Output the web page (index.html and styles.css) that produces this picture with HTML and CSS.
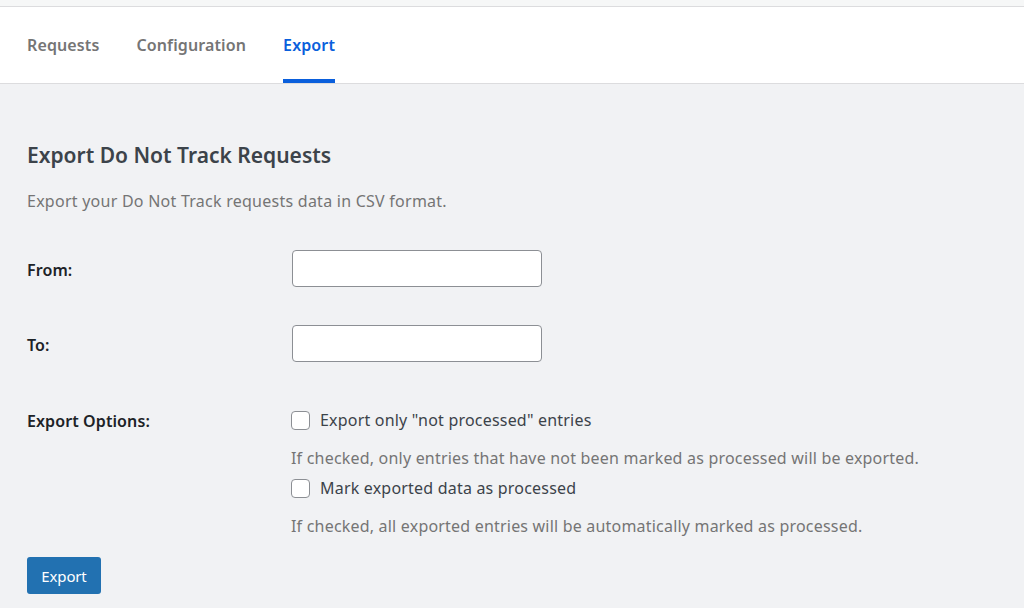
FILE: index.html
```html
<!DOCTYPE html>
<html>
<head>
<meta charset="utf-8">
<link rel="stylesheet" href="styles.css">
</head>
<body>
<div class="topstrip"></div>
<nav class="tabs">
  <a class="tab">Requests</a>
  <a class="tab">Configuration</a>
  <a class="tab active">Export</a>
</nav>
<main class="content">
  <h1 class="title">Export Do Not Track Requests</h1>
  <p class="intro">Export your Do Not Track requests data in CSV format.</p>
  <div class="form">
    <div class="row field">
      <label class="label">From:</label>
      <input class="input" type="text">
    </div>
    <div class="row field">
      <label class="label">To:</label>
      <input class="input" type="text">
    </div>
    <div class="row options">
      <div class="label">Export Options:</div>
      <div class="opts">
        <label class="check"><span class="box"></span>Export only "not processed" entries</label>
        <p class="desc">If checked, only entries that have not been marked as processed will be exported.</p>
        <label class="check"><span class="box"></span>Mark exported data as processed</label>
        <p class="desc">If checked, all exported entries will be automatically marked as processed.</p>
      </div>
    </div>
  </div>
  <button class="btn">Export</button>
</main>
</body>
</html>
```
FILE: styles.css
```css
* { box-sizing: border-box; }
html, body { margin: 0; padding: 0; }
body {
  background: #f1f2f4;
  font-family: "Noto Sans", "Open Sans", sans-serif;
  color: #3c434a;
  width: 1024px;
  height: 608px;
  overflow: hidden;
}
.topstrip {
  height: 7px;
  background: #f6f7f7;
  border-bottom: 1px solid #dcdcde;
}
.tabs {
  background: #fff;
  height: 77px;
  border-bottom: 1px solid #dcdcde;
  display: flex;
  gap: 37px;
  padding-left: 27px;
}
.tab {
  display: flex;
  align-items: center;
  font-size: 16px;
  font-weight: 600;
  color: #757575;
  padding-top: 4px;
  height: 76px;
  border-bottom: 4px solid transparent;
  letter-spacing: 0.12px;
}
.tab.active {
  color: #0a5fdc;
  border-bottom-color: #0a5fdc;
}
.content {
  padding: 0 27px;
}
.title {
  margin: 57px 0 0;
  font-size: 21px;
  font-weight: 600;
  color: #3c434a;
  line-height: 28px;
}
.intro {
  margin: 21px 0 0;
  font-size: 16px;
  line-height: 22px;
  color: #757575;
  letter-spacing: 0.25px;
}
.form {
  margin-top: 38px;
}
.row {
  display: flex;
}
.label {
  width: 264px;
  font-size: 16px;
  line-height: 22px;
  font-weight: 600;
  color: #1d2327;
  letter-spacing: 0.1px;
}
.field {
  align-items: center;
  height: 37px;
  margin-bottom: 38px;
}
.field .label {
  padding-top: 3px;
}
.input {
  width: 250px;
  height: 37px;
  border: 1px solid #8c8f94;
  border-radius: 4px;
  background: #fff;
  margin: 0 0 0 1px;
}
.options .label {
  padding-top: 10px;
}
.opts {
  display: flex;
  flex-direction: column;
}
.check {
  display: flex;
  align-items: center;
  height: 20px;
  font-size: 16px;
  color: #3c434a;
  letter-spacing: 0.2px;
  margin-top: 10px;
}
.desc + .check {
  margin-top: 8px;
}
.box {
  width: 19px;
  height: 19px;
  border: 1px solid #8c8f94;
  border-radius: 4px;
  background: #fff;
  margin-right: 10px;
  flex: none;
}
.desc {
  margin: 16px 0 0;
  font-size: 16px;
  line-height: 24px;
  color: #757575;
  letter-spacing: 0.2px;
}
.btn {
  margin-top: 19px;
  width: 74px;
  height: 37px;
  background: #2271b1;
  color: #fff;
  border: 0;
  border-radius: 3px;
  font-family: inherit;
  font-size: 15px;
  letter-spacing: -0.15px;
  padding: 0;
}
```
